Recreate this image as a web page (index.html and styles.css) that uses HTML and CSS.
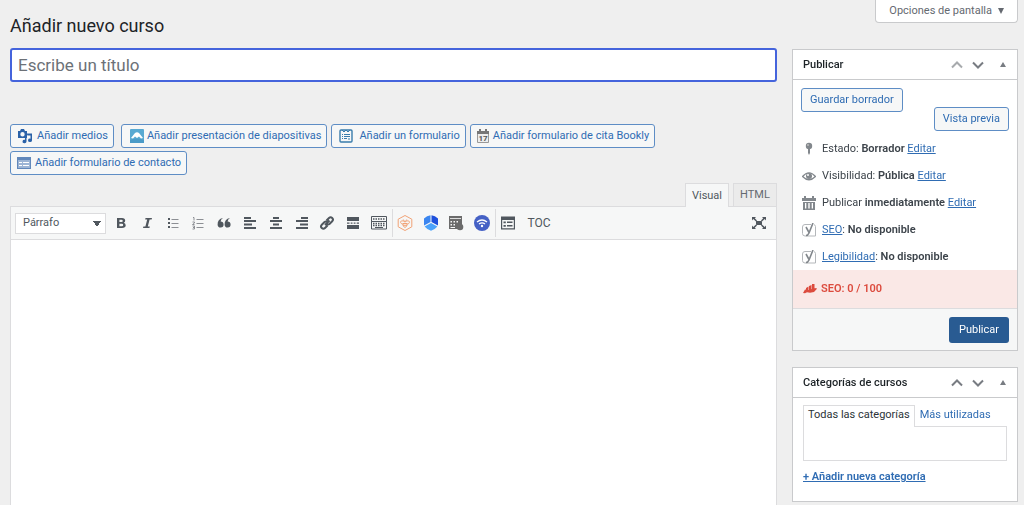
FILE: index.html
```
<!DOCTYPE html>
<html lang="es">
<head>
    <meta charset="UTF-8">
    <meta name="viewport" content="width=device-width, initial-scale=1.0">
    <title>Añadir nuevo curso</title>
    <link rel="stylesheet" href="styles.css">
</head>
<body>
    <header class="page-header">
        <h1>Añadir nuevo curso</h1>
        <button type="button" class="screen-options">Opciones de pantalla <span class="arrow-down"></span></button>
    </header>

    <div class="columns">
        <main class="main-column">
            <input type="text" class="title-input" aria-label="Título" placeholder="Escribe un título" autofocus>

            <div class="media-buttons">
                <button type="button" class="btn btn-media">
                    <svg width="16" height="16" viewBox="0 0 16 16" fill="#2b62a8"><path fill-rule="evenodd" d="M1 3h2l1-2h3l1 2h2v7H1zM5.500 4a2.200 2.200 0 1 0 0 4.400a2.200 2.200 0 0 0 0-4.400z"/><path d="M9.500 5.500H15v7a2 1.700 0 1 1-1.500-1.800V7.500h-3zM8 10h1.500v3.500A2 1.700 0 1 1 8 11.800z"/></svg>
                    Añadir medios
                </button>
                <button type="button" class="btn btn-slides">
                    <svg width="14" height="14" viewBox="0 0 14 14"><rect width="14" height="14" rx="1" fill="#58a9d2"/><path d="M1 9l4-5q2-1.500 4 0l4 5-2 .5-2-2-2 1.500-2-1.500-2 2z" fill="#fff"/><path d="M0 11q7-3 14 0v3H0z" fill="#4b9bc8"/></svg>
                    Añadir presentación de diapositivas
                </button>
                <button type="button" class="btn btn-form">
                    <svg width="14" height="14" viewBox="0 0 14 14" fill="none" stroke="#397cac"><rect x="1" y="1" width="12" height="12" rx="1" stroke-width="1.400"/><path d="M3 1l2 2 2-2 2 2 2-2M3 5.500h1M5 5.500h6M3 7.500h1M5 7.500h6M3 9.500h1M5 9.500h3M9 10h2"/></svg>
                    Añadir un formulario
                </button>
                <button type="button" class="btn btn-bookly">
                    <svg width="12" height="14" viewBox="0 0 12 14"><path d="M.5 3h11v10.500H.5z" fill="#eee" stroke="#999"/><path d="M0 2h12v3H0zM2 0h2v3H2zM8 0h2v3H8z" fill="#777"/><text x="6" y="12" class="calendar-day">17</text></svg>
                    Añadir formulario de cita Bookly
                </button>
                <button type="button" class="btn btn-contact">
                    <svg width="14" height="12" viewBox="0 0 14 12"><path d="M0 0h14v12H0z" fill="#6288bb"/><path d="M1 3h12v8H1z" fill="#9db5d5"/><path d="M2 5.500h3M2 8.500h3M6 5.500h6M6 8.500h6" stroke="#fff"/></svg>
                    Añadir formulario de contacto
                </button>
            </div>

            <div class="editor">
                <div class="editor-tabs">
                    <button type="button" class="editor-tab active">Visual</button>
                    <button type="button" class="editor-tab">HTML</button>
                </div>
                <div class="toolbar">
                    <select class="format-select" aria-label="Formato">
                        <option>Párrafo</option>
                    </select>
                    <div class="tools">
                        <button type="button" class="tool" aria-label="Negrita"><svg viewBox="0 0 16 16"><path fill-rule="evenodd" d="M4 3h5q3.200 0 3.200 2.700 0 1.500-1.400 2.100 1.900.6 1.900 2.500Q12.700 13 9 13H4zM6.400 4.800v2.300h2q1.400 0 1.400-1.100T8.400 4.800zM6.400 8.800v2.500h2.300q1.500 0 1.500-1.300T8.600 8.800z"/></svg></button>
                        <button type="button" class="tool" aria-label="Cursiva"><svg viewBox="0 0 16 16"><path d="M6.500 3H13l-.4 1.600h-2L8.800 11.400h2L10.400 13H4l.4-1.600h2L8.200 4.600h-2z"/></svg></button>
                        <button type="button" class="tool" aria-label="Lista"><svg viewBox="0 0 16 16"><path d="M3 3h2v2H3zM3 7h2v2H3zM3 11h2v2H3z"/><path class="thin" d="M6.500 4.500h7M6.500 8.500h7M6.500 12.500h7"/></svg></button>
                        <button type="button" class="tool" aria-label="Lista numerada"><svg viewBox="0 0 16 16"><path class="thin" d="M6.500 4.500h7M6.500 8.500h7M6.500 12.500h7M3 2.500h1v3M2.500 7h2v1l-2 1.500h2M2.500 11h2v3h-2M3 12.500h1"/></svg></button>
                        <button type="button" class="tool" aria-label="Cita"><svg viewBox="0 0 16 16"><path d="M7 3Q4.800 4 4.600 6.500a3 3 0 1 1-3 3.200Q1.300 4 7 3zM14 3q-2.200 1-2.400 3.500a3 3 0 1 1-3 3.200Q8.300 4 14 3z"/></svg></button>
                        <button type="button" class="tool" aria-label="Alinear a la izquierda"><svg viewBox="0 0 16 16"><path class="bar" d="M2 3h7M2 6h12M2 9.500h8M2 13h12"/></svg></button>
                        <button type="button" class="tool" aria-label="Centrar"><svg viewBox="0 0 16 16"><path class="bar" d="M5 3h6M2 6h12M5 9.500h6M2 13h12"/></svg></button>
                        <button type="button" class="tool" aria-label="Alinear a la derecha"><svg viewBox="0 0 16 16"><path class="bar" d="M7 3h7M2 6h12M6 9.500h8M2 13h12"/></svg></button>
                        <button type="button" class="tool" aria-label="Enlace"><svg viewBox="0 0 16 16"><path class="link-line" d="M6 10l4.500-4.500M7.500 5.500l2.500-2.500a2.200 2.200 0 0 1 3.200 3.200L10.500 9Q9 10 7.700 9M8.500 10.500L6 13a2.200 2.200 0 0 1-3.200-3.200L5.500 7Q7 6 8.300 7"/></svg></button>
                        <button type="button" class="tool" aria-label="Leer más"><svg viewBox="0 0 16 16"><path d="M2 2h12v4H2zM2 10h12v4H2zM2 7.400h2.500v1.300H2zM5.700 7.400h1.800v1.300H5.700zM8.700 7.400h1.800v1.300H8.700zM11.700 7.400H14v1.300h-2.300z"/></svg></button>
                        <button type="button" class="tool" aria-label="Barra de herramientas"><svg viewBox="0 0 16 16"><path fill="none" stroke="#50575e" d="M.5 1.500h15v5H.5zM.5 6.500h15v7.500H.5z"/><path fill="none" stroke="#50575e" stroke-width="1.300" stroke-dasharray="1.500 1" d="M2 4h12M2 8.500h12M2 10.500h12"/><path stroke="#50575e" d="M4 12.500h8"/></svg></button>
                        <span class="divider"></span>
                        <button type="button" class="tool" aria-label="Abeja"><svg viewBox="0 0 16 16" fill="none" stroke="#f1a276"><path d="M8 .5l6.800 3.700v7.600L8 15.500l-6.800-3.700V4.200z"/><path d="M8 7C4 4 2 7.500 5 9h1M8 7c4-3 6 .5 3 2h-1M6 8.500h4v2.200L8 12.500l-2-1.800zM6 10.300h4M7.500 6.500L6.300 4.500M8.500 6.500l1.200-2"/></svg></button>
                        <button type="button" class="tool" aria-label="Bloques"><svg viewBox="0 0 16 16"><path fill="#3b86f0" d="M7.500.3v6.800L1 10.500V3.500q3-2.700 6.500-3.200z"/><path fill="#1e50dc" d="M8.500.3Q12 .8 15 3.500v7L8.500 7.100z"/><path fill="#4ba3fb" d="M8 8l6.400 3.500Q12 14.500 8 15.700 4 14.500 1.600 11.500z"/></svg></button>
                        <button type="button" class="tool" aria-label="Reserva"><svg viewBox="0 0 16 16"><path fill="#6b6b6b" fill-rule="evenodd" d="M1 1h13v9H11v4H1zM2.500 6v1.500H4V6zM5.500 6v1.500H7V6zM8.500 6v1.500H10V6zM2.500 9v1.500H4V9zM5.500 9v1.500H7V9zM2.500 12v1H7v-1z"/><path stroke="#ddd" d="M2 3.500h11"/><circle cx="12" cy="12" r="3.300" fill="#6b6b6b"/></svg></button>
                        <button type="button" class="tool" aria-label="Wifi"><svg viewBox="0 0 16 16"><circle cx="8" cy="8" r="8" fill="#4561c5"/><path fill="none" stroke="#fff" stroke-width="1.300" d="M3 7q5-4 10 0M5 9q3-2.400 6 0"/><circle cx="8" cy="11" r="1.200" fill="#fff"/></svg></button>
                        <span class="divider"></span>
                        <button type="button" class="tool" aria-label="Tabla de formulario"><svg viewBox="0 0 16 16"><path fill-rule="evenodd" d="M1 1.500h14v13H1zM2.200 5v8.300h11.600V5z"/><path d="M3.500 6.500h2.300v1.800H3.500zM3.500 10h2.300v1.800H3.500zM7 6.500h5.500V8H7zM7 10h5.500v1.500H7z"/></svg></button>
                        <button type="button" class="tool tool-text">TOC</button>
                    </div>
                    <button type="button" class="tool fullscreen" aria-label="Pantalla completa"><svg viewBox="0 0 16 16"><path d="M5 6h6v4H5zM1 2h4L3.800 3.200 6 5.400l-1 1L2.300 4 1 5.500zM15 2h-4l1.200 1.200L10 5.400l1 1L13.700 4 15 5.500zM1 14h4l-1.200-1.200L6 10.600l-1-1L2.300 12 1 10.500zM15 14h-4l1.200-1.200-2.200-2.200 1-1 2.700 2.400 1.300-1.500z"/></svg></button>
                </div>
                <div class="editor-body" contenteditable="true" role="textbox" aria-label="Contenido"></div>
            </div>
        </main>

        <aside class="sidebar">
            <section class="postbox">
                <div class="postbox-header">
                    <h2>Publicar</h2>
                    <div class="postbox-actions">
                        <button type="button" class="handle disabled" aria-label="Subir"><svg width="12" height="8" viewBox="0 0 12 8"><path d="M1 6.500l5-5 5 5"/></svg></button>
                        <button type="button" class="handle" aria-label="Bajar"><svg width="12" height="8" viewBox="0 0 12 8"><path d="M1 1.500l5 5 5-5"/></svg></button>
                        <button type="button" class="handle toggle" aria-label="Plegar"><span class="arrow-up"></span></button>
                    </div>
                </div>
                <div class="publish-actions">
                    <button type="button" class="btn">Guardar borrador</button>
                    <button type="button" class="btn btn-preview">Vista previa</button>
                </div>
                <ul class="publish-info">
                    <li>
                        <svg width="14" height="14" viewBox="0 0 14 14" fill="#82878c"><circle cx="7" cy="4" r="3.200"/><path d="M6 6h2v5l-1 2-1-2z"/><circle cx="6" cy="3" r="1" fill="#bbb"/></svg>
                        <span>Estado: <b>Borrador</b> <a href="#">Editar</a></span>
                    </li>
                    <li>
                        <svg width="14" height="14" viewBox="0 0 14 14"><path d="M.5 7.500Q7 0 13.500 7.500 7 14 .5 7.500z" fill="#fff" stroke="#82878c" stroke-width="1.200"/><circle cx="7" cy="7" r="3" fill="#82878c"/><circle cx="6" cy="6" r="1" fill="#fff"/></svg>
                        <span>Visibilidad: <b>Pública</b> <a href="#">Editar</a></span>
                    </li>
                    <li>
                        <svg width="14" height="14" viewBox="0 0 14 14"><path fill="#82878c" fill-rule="evenodd" d="M0 2h2V0h2v2h6V0h2v2h2v3H0zM1 6h12v8H1zM3 7v5.500h1.300V7zM6.300 7v5.500h1.400V7zM9.700 7v5.500H11V7z"/></svg>
                        <span>Publicar <b>inmediatamente</b> <a href="#">Editar</a></span>
                    </li>
                    <li>
                        <svg width="14" height="14" viewBox="0 0 14 14" fill="none" stroke="#82878c"><path stroke="#b4b7ba" d="M9 1.500H3Q.5 1.500.5 4v6.500Q.5 13 3 13h10.500V3.500Q13 1.700 12 1.500"/><path stroke-width="1.600" d="M4 4l3 5.500M11 0L7 10q-1 2.500-3 2.500"/></svg>
                        <span><a href="#">SEO</a>: <b>No disponible</b></span>
                    </li>
                    <li>
                        <svg width="14" height="14" viewBox="0 0 14 14" fill="none" stroke="#82878c"><path stroke="#b4b7ba" d="M9 1.500H3Q.5 1.500.5 4v6.500Q.5 13 3 13h10.500V3.500Q13 1.700 12 1.500"/><path stroke-width="1.600" d="M4 4l3 5.500M11 0L7 10q-1 2.500-3 2.500"/></svg>
                        <span><a href="#">Legibilidad</a>: <b>No disponible</b></span>
                    </li>
                </ul>
                <div class="seo-score">
                    <svg width="14" height="10" viewBox="0 0 14 10" fill="#dc4b3e"><path d="M3 4l2.500-1.500V6H3zM6 2l2.500-1v6H6zM9 0h2.500v6H9zM0 9l2-3.500 3 .5 5-1 3-1 1 .8L11 8l-4 .8-3-.5-2 1z"/></svg>
                    SEO: 0 / 100
                </div>
                <div class="publish-footer">
                    <button type="submit" class="btn-primary">Publicar</button>
                </div>
            </section>

            <section class="postbox">
                <div class="postbox-header">
                    <h2>Categorías de cursos</h2>
                    <div class="postbox-actions">
                        <button type="button" class="handle" aria-label="Subir"><svg width="12" height="8" viewBox="0 0 12 8"><path d="M1 6.500l5-5 5 5"/></svg></button>
                        <button type="button" class="handle" aria-label="Bajar"><svg width="12" height="8" viewBox="0 0 12 8"><path d="M1 1.500l5 5 5-5"/></svg></button>
                        <button type="button" class="handle toggle" aria-label="Plegar"><span class="arrow-up"></span></button>
                    </div>
                </div>
                <div class="categories">
                    <div class="category-tabs">
                        <a href="#" class="category-tab active">Todas las categorías</a>
                        <a href="#" class="category-tab">Más utilizadas</a>
                    </div>
                    <div class="category-panel"></div>
                    <a href="#" class="add-category">+ Añadir nueva categoría</a>
                </div>
            </section>
        </aside>
    </div>
</body>
</html>
```
FILE: styles.css
```
* {
    margin: 0;
    padding: 0;
    box-sizing: border-box;
}
body {
    display: flex;
    flex-direction: column;
    min-height: 100vh;
    background: #efefef;
    color: #3c434a;
    font-family: Roboto, Inter, sans-serif;
    font-size: 11px;
    line-height: 16px;
}
button, input, select {
    font: inherit;
    color: inherit;
}
button {
    cursor: pointer;
}
a {
    color: #2f6cb3;
}
b {
    font-weight: 600;
}

/* header */
.page-header {
    display: flex;
    justify-content: space-between;
    align-items: flex-start;
    height: 48px;
    padding: 0 6px 0 10px;
}
h1 {
    margin-top: 14px;
    color: #1d2327;
    font-size: 18px;
    font-weight: 400;
    line-height: 24px;
}
.screen-options {
    display: flex;
    align-items: center;
    gap: 6px;
    height: 23px;
    padding: 0 13px;
    background: #fff;
    border: 1px solid #c9cacc;
    border-top: none;
    border-radius: 0 0 4px 4px;
    color: #646970;
}
.arrow-down {
    border: 3px solid transparent;
    border-top: 6px solid #646970;
    border-bottom: none;
}
.arrow-up {
    border: 3px solid transparent;
    border-bottom: 5px solid #787c82;
    border-top: none;
}

.columns {
    flex: 1;
    display: grid;
    grid-template-columns: 1fr 226px;
    gap: 15px;
    padding: 0 6px 0 10px;
}
.main-column {
    display: flex;
    flex-direction: column;
    min-width: 0;
}
.title-input {
    width: 100%;
    height: 34px;
    padding: 0 6px;
    background: #fff;
    border: 2px solid #4564dc;
    border-radius: 3px;
    outline: none;
    font-size: 17px;
}
.title-input::placeholder {
    color: #6c7177;
    opacity: 1;
}

/* buttons */
.btn {
    display: flex;
    align-items: center;
    gap: 4px;
    height: 24px;
    padding: 0 6px;
    background: #f6f7f7;
    border: 1px solid #5e8dc5;
    border-radius: 3px;
    color: #2f6cb3;
    white-space: nowrap;
}
.media-buttons {
    display: flex;
    flex-wrap: wrap;
    gap: 3px 4px;
    margin-top: 42px;
}
.media-buttons .btn {
    padding-right: 5px;
}
.btn-media {
    margin-right: 3px;
}
.btn-slides {
    padding-left: 8px;
    gap: 3px;
}
.btn-form {
    padding-left: 7px;
    gap: 6px;
}
.calendar-day {
    fill: #555;
    font-size: 8px;
    font-weight: 700;
    text-anchor: middle;
}

/* editor */
.editor {
    flex: 1;
    display: flex;
    flex-direction: column;
    margin-top: 8px;
}
.editor-tabs {
    display: flex;
    justify-content: flex-end;
    gap: 4px;
}
.editor-tab {
    width: 44px;
    height: 23px;
    background: #ebebeb;
    border: 1px solid #dcdcde;
    border-bottom: none;
    color: #646970;
}
.editor-tab.active {
    height: 24px;
    margin-bottom: -1px;
    background: #f6f7f7;
    color: #50575e;
    z-index: 1;
}
.toolbar {
    display: flex;
    align-items: center;
    height: 34px;
    padding: 0 8px 0 4px;
    background: #f6f7f7;
    border: 1px solid #dcdcde;
}
.format-select {
    width: 91px;
    height: 21px;
    padding: 0 7px;
    appearance: none;
    background-color: #fff;
    background-image: linear-gradient(to bottom left, #50575e 50%, transparent 50%), linear-gradient(to bottom right, #50575e 50%, transparent 50%);
    background-position: 77px 7px, 81px 7px;
    background-size: 4px 6px;
    background-repeat: no-repeat;
    border: 1px solid #dcdcde;
    color: #50575e;
}
.tools {
    display: flex;
    align-items: center;
    width: 449px;
    margin-left: 2px;
}
.tool {
    flex: 1;
    display: flex;
    align-items: center;
    justify-content: center;
    height: 24px;
    background: none;
    border: none;
    color: #50575e;
}
.tool svg {
    flex: none;
    width: 16px;
    height: 16px;
    fill: #50575e;
}
.tool svg[fill="none"] {
    fill: none;
}
.tool .thin {
    fill: none;
    stroke: #8c8f94;
}
.tool .bar {
    fill: none;
    stroke: #50575e;
    stroke-width: 2;
}
.tool .link-line {
    fill: none;
    stroke: #50575e;
    stroke-width: 2;
}
.tool-text {
    flex: none;
    width: 36px;
    font-size: 12px;
}
.divider {
    width: 1px;
    height: 28px;
    margin-right: -1px;
    background: #dcdcde;
}
.fullscreen {
    flex: none;
    width: 18px;
    margin-left: auto;
}
.editor-body {
    flex: 1;
    min-height: 200px;
    background: #fff;
    border: 1px solid #dcdcde;
    border-width: 0 1px;
    outline: none;
}

/* sidebar */
.sidebar {
    display: flex;
    flex-direction: column;
    gap: 16px;
    padding: 1px 0 3px;
}
.postbox {
    background: #fff;
    border: 1px solid #c9cacc;
}
.postbox-header {
    display: flex;
    align-items: center;
    justify-content: space-between;
    height: 30px;
    padding: 0 6px 0 10px;
    border-bottom: 1px solid #c9cacc;
}
h2 {
    color: #1d2327;
    font-size: 11px;
    font-weight: 500;
}
.postbox-actions {
    display: flex;
    align-items: center;
}
.handle {
    display: flex;
    align-items: center;
    justify-content: center;
    width: 21px;
    height: 20px;
    background: none;
    border: none;
}
.handle svg {
    fill: none;
    stroke: #787c82;
    stroke-width: 2;
}
.handle.disabled svg {
    stroke: #a7aaad;
}
.handle.toggle {
    width: 16px;
    margin-left: 7px;
}
.publish-actions {
    display: flex;
    justify-content: space-between;
    padding: 8px 8px 0;
}
.publish-actions .btn {
    padding: 0 8px;
}
.btn-preview {
    margin-top: 19px;
}
.publish-info {
    display: flex;
    flex-direction: column;
    gap: 11px;
    padding: 10px 9px 5px;
    list-style: none;
}
.publish-info li {
    display: flex;
    align-items: center;
    gap: 6px;
}
.seo-score {
    display: flex;
    align-items: center;
    gap: 4px;
    height: 38px;
    padding: 0 10px;
    background: #fae8e6;
    color: #dc4b3e;
    font-weight: 600;
}
.publish-footer {
    display: flex;
    align-items: center;
    justify-content: flex-end;
    height: 42px;
    padding: 0 8px;
    background: #f6f7f7;
    border-top: 1px solid #dcdcde;
}
.btn-primary {
    height: 26px;
    padding: 0 10px;
    background: #295b92;
    border: none;
    border-radius: 3px;
    color: #fff;
}
.categories {
    padding: 7px 10px 16px;
}
.category-tabs {
    display: flex;
}
.category-tab {
    height: 21px;
    padding: 1px 4px;
    border: 1px solid transparent;
    border-bottom: none;
    text-decoration: none;
    white-space: nowrap;
}
.category-tab.active {
    height: 22px;
    margin-bottom: -1px;
    background: #fff;
    border-color: #dcdcde;
    color: #2c3338;
    z-index: 1;
}
.category-panel {
    height: 35px;
    margin-bottom: 8px;
    border: 1px solid #dcdcde;
}
.add-category {
    font-weight: 600;
}
```
